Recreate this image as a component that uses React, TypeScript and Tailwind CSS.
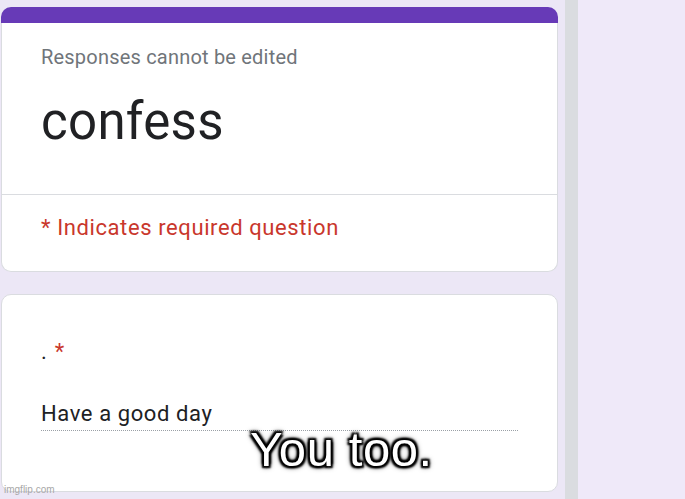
export default function App() {
  return (
    <div className="relative flex h-[499px] w-[685px] overflow-hidden bg-[#ece7f6] font-['Roboto',sans-serif]">
      <div className="flex w-[565px] shrink-0 flex-col gap-[22px] pl-[1px] pt-[7px]">
        {/* header card */}
        <div className="w-[557px]">
          <div className="h-[16px] rounded-t-[10px] bg-[#673ab7]" />
          <div className="rounded-b-[10px] border-x border-b border-[#dadce0] bg-white">
            <div className="h-[172px] border-b border-[#dadce0] px-[39px] pt-[22px]">
              <p className="text-[20px] leading-[24px] tracking-[0.2px] text-[#70757a]">Responses cannot be edited</p>
              <h1 className="mt-[25px] text-[51px] leading-[56px] tracking-[0.3px] text-[#202124]">confess</h1>
            </div>
            <div className="h-[76px] px-[39px] pt-[19px]">
              <p className="text-[22px] leading-[28px] tracking-[0.6px] text-[#c9372c]">* Indicates required question</p>
            </div>
          </div>
        </div>

        {/* question card */}
        <div className="h-[198px] w-[557px] rounded-[10px] border border-[#dadce0] bg-white px-[39px] pt-[43px]">
          <p className="text-[22px] leading-[28px] text-[#202124]">
            .<span className="pl-[8px] text-[#c9372c]">*</span>
          </p>
          <div className="mt-[34px] w-[477px] border-b border-dotted border-[#9aa0a6] pb-[2px]">
            <p className="text-[22px] leading-[28px] tracking-[0.6px] text-[#202124]">Have a good day</p>
          </div>
        </div>
      </div>

      <div className="w-[13px] shrink-0 bg-[#dadce0]" />
      <div className="flex-1 bg-[#efe9f9]" />

      {/* meme caption */}
      <span className="absolute left-[250px] top-[425px] font-['Liberation_Sans',Arial,sans-serif] text-[49px] leading-[49px] tracking-[0.6px] text-white [text-shadow:2px_2px_2px_#000,-2px_-2px_2px_#000,2px_-2px_2px_#000,-2px_2px_2px_#000,0_0_3px_#000,0_0_4px_#000,0_0_6px_#000]">
        You too.
      </span>
      <span className="absolute left-[4px] top-[484px] font-['Liberation_Sans',Arial,sans-serif] text-[10px] leading-[12px] text-[#a8a8a8]">
        imgflip.com
      </span>
    </div>
  );
}
